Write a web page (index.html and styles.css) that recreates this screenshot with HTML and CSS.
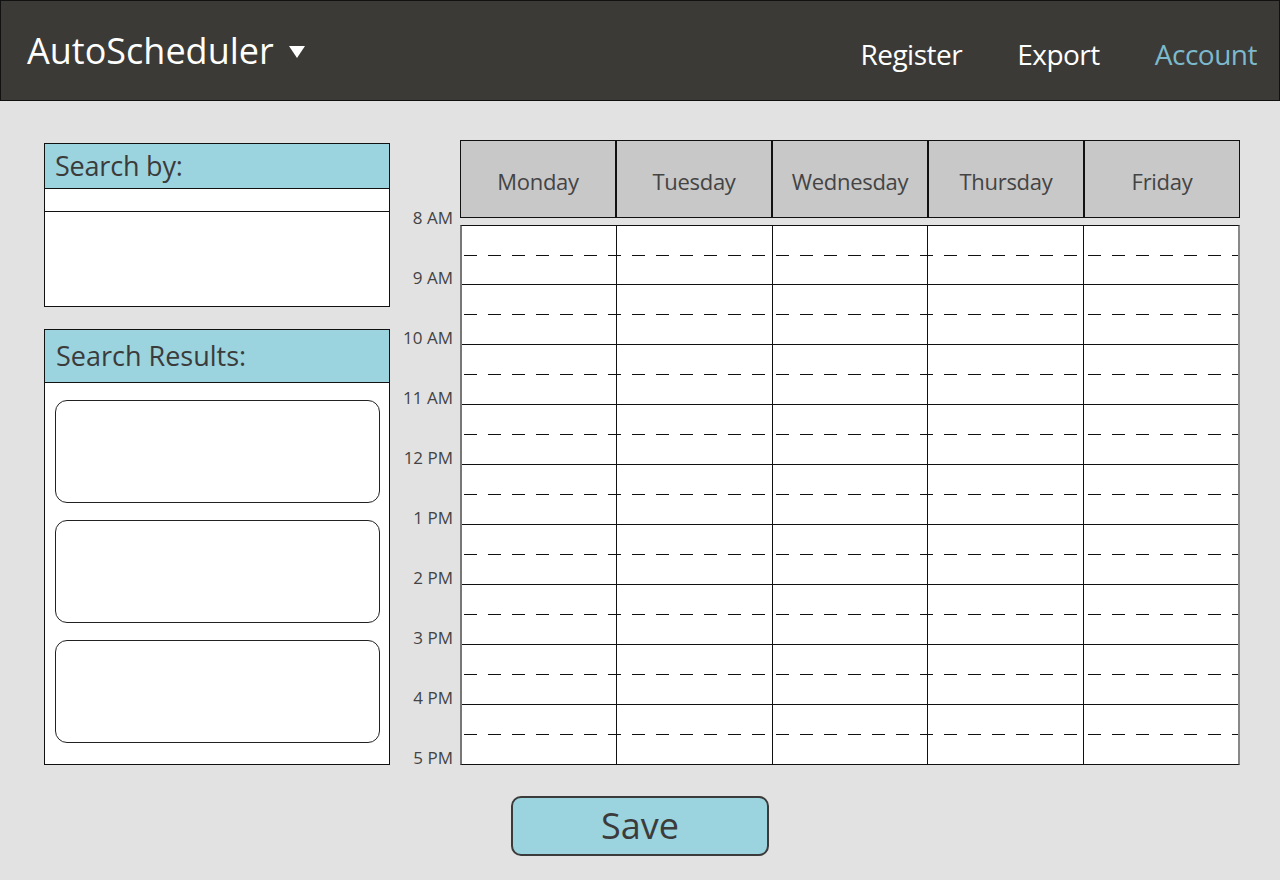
FILE: index.html
```html
<!DOCTYPE html>
<html lang="en">
<head>
    <meta charset="UTF-8">
    <meta name="viewport" content="width=device-width, initial-scale=1.0">
    <title>AutoScheduler</title>
    <link rel="stylesheet" href="styles.css">
</head>
<body>
    <header class="topbar">
        <div class="brand">
            <span class="brand-name">AutoScheduler</span>
            <svg class="brand-caret" width="16" height="12" viewBox="0 0 16 12"><polygon points="0,0 16,0 8,12" fill="#ffffff"/></svg>
        </div>
        <nav class="nav">
            <a class="nav-link" href="#">Register</a>
            <a class="nav-link" href="#">Export</a>
            <a class="nav-link active" href="#">Account</a>
        </nav>
    </header>

    <main class="content">
        <aside class="sidebar">
            <section class="panel search-by">
                <h2 class="panel-title">Search by:</h2>
                <div class="search-input"></div>
                <div class="search-options"></div>
            </section>

            <section class="panel results">
                <h2 class="panel-title tall">Search Results:</h2>
                <div class="result-list">
                    <div class="result-card"></div>
                    <div class="result-card"></div>
                    <div class="result-card"></div>
                </div>
            </section>
        </aside>

        <section class="schedule">
            <div class="times">
                <span>8 AM</span>
                <span>9 AM</span>
                <span>10 AM</span>
                <span>11 AM</span>
                <span>12 PM</span>
                <span>1 PM</span>
                <span>2 PM</span>
                <span>3 PM</span>
                <span>4 PM</span>
                <span>5 PM</span>
            </div>
            <div class="grid">
                <div class="days">
                    <div class="day">Monday</div>
                    <div class="day">Tuesday</div>
                    <div class="day">Wednesday</div>
                    <div class="day">Thursday</div>
                    <div class="day">Friday</div>
                </div>
                <div class="slots" id="slots"></div>
            </div>
        </section>
    </main>

    <div class="actions">
        <button class="save-btn">Save</button>
    </div>

    <script>
        const slots = document.getElementById('slots');
        for (let h = 0; h < 9; h++) {
            const row = document.createElement('div');
            row.className = 'slot-row';
            for (let d = 0; d < 5; d++) {
                const cell = document.createElement('div');
                cell.className = 'slot';
                row.appendChild(cell);
            }
            slots.appendChild(row);
        }
    </script>
</body>
</html>
```

FILE: styles.css
```css
body {
    margin: 0;
    background-color: #e2e2e2;
    font-family: 'Open Sans', 'Noto Sans', sans-serif;
    color: #3b3b3b;
}
.topbar {
    height: 101px;
    box-sizing: border-box;
    background-color: #3b3a36;
    border: 1px solid #111;
    display: flex;
    align-items: center;
    justify-content: space-between;
    padding: 0 22px 0 26px;
}
.brand {
    display: flex;
    align-items: center;
    gap: 15px;
    color: #fff;
}
.brand-name {
    font-size: 36px;
}
.brand-caret {
    margin-top: 2px;
}
.nav {
    display: flex;
    gap: 55px;
    padding-top: 6px;
}
.nav-link {
    color: #fff;
    text-decoration: none;
    font-size: 28px;
    letter-spacing: -0.5px;
}
.nav-link.active {
    color: #7db9cc;
}
.content {
    display: flex;
    padding: 39px 0 0 44px;
}
.sidebar {
    width: 346px;
    margin-top: 3px;
    display: flex;
    flex-direction: column;
    gap: 22px;
}
.panel {
    background: #fff;
    border: 1px solid #111;
}
.panel-title {
    margin: 0;
    height: 45px;
    box-sizing: border-box;
    background-color: #9bd3de;
    border-bottom: 1px solid #111;
    font-size: 27px;
    font-weight: normal;
    line-height: 44px;
    padding-left: 10px;
    letter-spacing: -0.2px;
}
.panel-title.tall {
    height: 53px;
    line-height: 52px;
    padding-left: 11px;
    letter-spacing: 0;
}
.search-input {
    height: 22px;
    border-bottom: 1px solid #111;
}
.search-options {
    height: 94px;
}
.result-list {
    display: flex;
    flex-direction: column;
    gap: 17px;
    padding: 17px 9px 21px 10px;
}
.result-card {
    height: 101px;
    border: 1px solid #222;
    border-radius: 12px;
}
.schedule {
    display: flex;
}
.times {
    width: 70px;
    box-sizing: border-box;
    padding: 68px 7px 0 0;
    display: flex;
    flex-direction: column;
    align-items: flex-end;
}
.times span {
    height: 60px;
    line-height: 20px;
    font-size: 17px;
    color: #444;
}
.times span:last-child {
    height: 20px;
}
.grid {
    width: 780px;
}
.days {
    display: flex;
    height: 78px;
    margin-bottom: 7px;
}
.day {
    flex: 1;
    background-color: #c8c8c8;
    border: 1px solid #111;
    display: flex;
    align-items: center;
    justify-content: center;
    padding-top: 3px;
    font-size: 22px;
    color: #444;
    letter-spacing: -0.3px;
}
.slots {
    background: #fff;
    border: 1px solid #111;
    border-left: 2px solid #777;
    border-right: 2px solid #888;
}
.slot-row {
    display: flex;
    height: 60px;
    box-sizing: border-box;
    border-bottom: 1px solid #111;
    background-image: repeating-linear-gradient(to right, #111 0 13px, transparent 13px 24px);
    background-size: 100% 1px;
    background-position: 2px 29px;
    background-repeat: no-repeat;
}
.slot-row:first-child,
.slot-row:last-child {
    height: 59px;
}
.slot-row:last-child {
    border-bottom: none;
}
.slot {
    flex: 1;
    border-right: 1px solid #111;
}
.slot:last-child {
    border-right: none;
}
.actions {
    display: flex;
    justify-content: center;
    padding-top: 28px;
}
.save-btn {
    width: 258px;
    height: 60px;
    background-color: #9bd3de;
    border: 2px solid #3b3b3b;
    border-radius: 10px;
    font-family: 'Open Sans', 'Noto Sans', sans-serif;
    font-size: 36px;
    color: #3b3b3b;
    padding: 0;
    line-height: 52px;
}
```
